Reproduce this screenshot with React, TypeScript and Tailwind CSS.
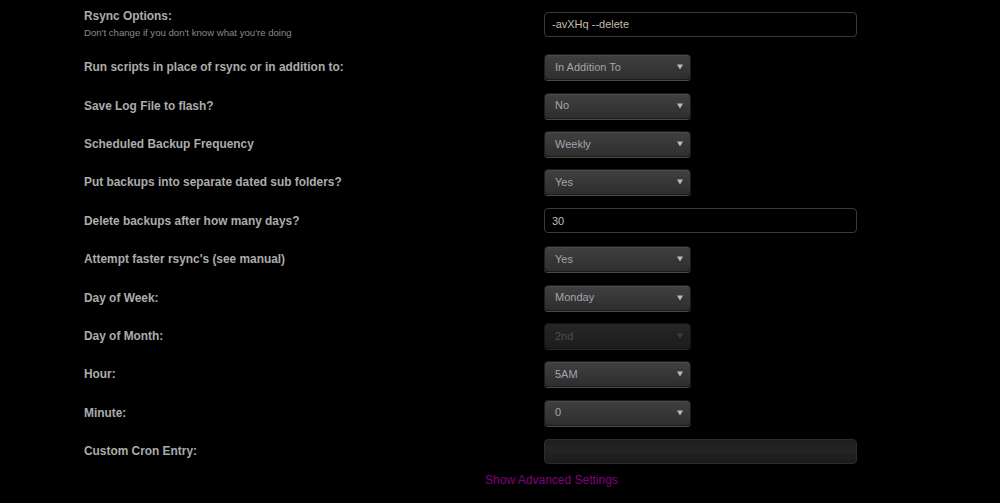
import React from 'react';

type Row = {
  label: string;
  kind: 'select' | 'input' | 'empty';
  value?: string;
  disabled?: boolean;
};

const rows: Row[] = [
  { label: 'Run scripts in place of rsync or in addition to:', kind: 'select', value: 'In Addition To' },
  { label: 'Save Log File to flash?', kind: 'select', value: 'No' },
  { label: 'Scheduled Backup Frequency', kind: 'select', value: 'Weekly' },
  { label: 'Put backups into separate dated sub folders?', kind: 'select', value: 'Yes' },
  { label: 'Delete backups after how many days?', kind: 'input', value: '30' },
  { label: "Attempt faster rsync's (see manual)", kind: 'select', value: 'Yes' },
  { label: 'Day of Week:', kind: 'select', value: 'Monday' },
  { label: 'Day of Month:', kind: 'select', value: '2nd', disabled: true },
  { label: 'Hour:', kind: 'select', value: '5AM' },
  { label: 'Minute:', kind: 'select', value: '0' },
  { label: 'Custom Cron Entry:', kind: 'empty' },
];

function Select({ value, disabled }: { value: string; disabled?: boolean }) {
  return (
    <div
      className={
        disabled
          ? 'flex h-[26px] w-[147px] items-center justify-between rounded-[4px] border border-[#141414] bg-gradient-to-b from-[#262626] to-[#1c1c1c] pl-[10px] pr-[7px] text-[11px] text-[#4e4e4e] shadow-[0_1px_0_#2a2a2a]'
          : 'flex h-[26px] w-[147px] items-center justify-between rounded-[4px] border border-[#1c1c1c] bg-gradient-to-b from-[#404040] to-[#2e2e2e] pl-[10px] pr-[7px] text-[11px] text-[#a2a6ad] shadow-[0_1px_0_#4a4a4a,inset_0_1px_0_rgba(255,255,255,0.06)]'
      }
    >
      <span>{value}</span>
      <svg width="6" height="6" viewBox="0 0 6 6">
        <path d="M0 0.5 H6 L3 5.5 Z" fill={disabled ? '#3e3e3e' : '#bdbdbd'} />
      </svg>
    </div>
  );
}

function TextBox({ value }: { value: string }) {
  return (
    <div className="flex h-[25px] w-[313px] items-center rounded-[4px] border-[1.5px] border-[#3a3a3a] bg-black px-[7px] text-[11px] text-[#c4bcae]">
      {value}
    </div>
  );
}

export default function App() {
  return (
    <div
      className="min-h-screen w-full bg-black pl-[84px]"
      style={{ fontFamily: '"Liberation Sans", Arial, sans-serif' }}
    >
      <div className="flex h-[48px] items-start">
        <div className="w-[460px] pt-[8px]">
          <div className="text-[11.9px] font-bold leading-[16px] text-[#acacac]">Rsync Options:</div>
          <div className="mt-[2px] text-[9.6px] text-[#8a8a8a]">Don't change if you don't know what you're doing</div>
        </div>
        <div className="pt-[12px]">
          <TextBox value="-avXHq --delete" />
        </div>
      </div>
      {rows.map((r) => (
        <div key={r.label} className="flex h-[38.4px] items-center">
          <div className="w-[460px] text-[11.9px] font-bold leading-[16px] text-[#acacac]">{r.label}</div>
          {r.kind === 'select' && <Select value={r.value!} disabled={r.disabled} />}
          {r.kind === 'input' && <TextBox value={r.value!} />}
          {r.kind === 'empty' && (
            <div className="h-[25px] w-[313px] rounded-[4px] border-[1.5px] border-[#2c2c2c] bg-gradient-to-b from-[#1e1e1e] via-[#242424] to-[#1a1a1a]" />
          )}
        </div>
      ))}
      <div className="flex w-[835px] justify-center pt-[1px] pl-[100px]">
        <a className="text-[12px] text-[#800080]">Show Advanced Settings</a>
      </div>
    </div>
  );
}
